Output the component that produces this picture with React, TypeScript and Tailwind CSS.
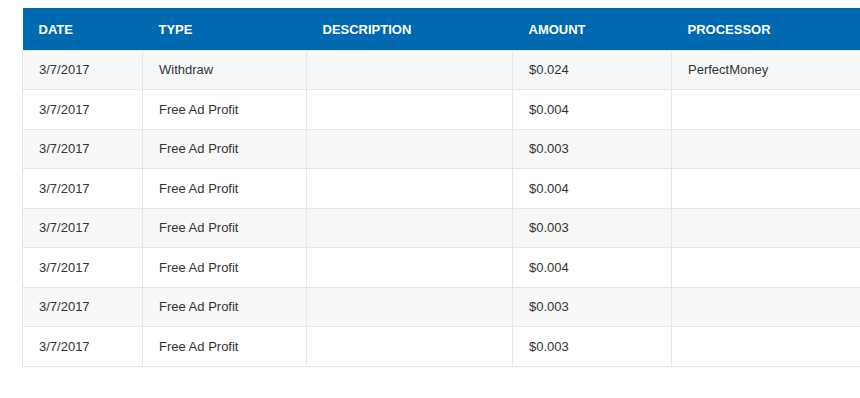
import React from "react";

const rows = [
  ["3/7/2017", "Withdraw", "", "$0.024", "PerfectMoney"],
  ["3/7/2017", "Free Ad Profit", "", "$0.004", ""],
  ["3/7/2017", "Free Ad Profit", "", "$0.003", ""],
  ["3/7/2017", "Free Ad Profit", "", "$0.004", ""],
  ["3/7/2017", "Free Ad Profit", "", "$0.003", ""],
  ["3/7/2017", "Free Ad Profit", "", "$0.004", ""],
  ["3/7/2017", "Free Ad Profit", "", "$0.003", ""],
  ["3/7/2017", "Free Ad Profit", "", "$0.003", ""],
];

const headers = ["DATE", "TYPE", "DESCRIPTION", "AMOUNT", "PROCESSOR"];
const widths = ["w-[120px]", "w-[164px]", "w-[206px]", "w-[159px]", "w-[220px]"];

export default function App() {
  return (
    <div
      className="w-[860px] h-[398px] overflow-hidden bg-white pt-2 pl-[22px]"
      style={{ fontFamily: '"Liberation Sans", Arial, sans-serif' }}
    >
      <table className="w-[869px] table-fixed border-collapse text-[13px]">
        <colgroup>
          {widths.map((w, i) => (
            <col key={i} className={w} />
          ))}
        </colgroup>
        <thead>
          <tr className="bg-[#0069b0] h-[42px]">
            {headers.map((h) => (
              <th
                key={h}
                className="text-left font-bold text-white px-4 pt-[2px] pb-0 align-middle"
              >
                {h}
              </th>
            ))}
          </tr>
        </thead>
        <tbody>
          {rows.map((r, i) => (
            <tr
              key={i}
              className={`h-[39.5px] ${i % 2 === 0 ? "bg-[#f8f8f8]" : "bg-white"}`}
            >
              {r.map((c, j) => (
                <td
                  key={j}
                  className="border border-[#e6e6e6] px-4 py-0 align-middle text-[#333333] leading-none"
                >
                  {c}
                </td>
              ))}
            </tr>
          ))}
        </tbody>
      </table>
    </div>
  );
}
